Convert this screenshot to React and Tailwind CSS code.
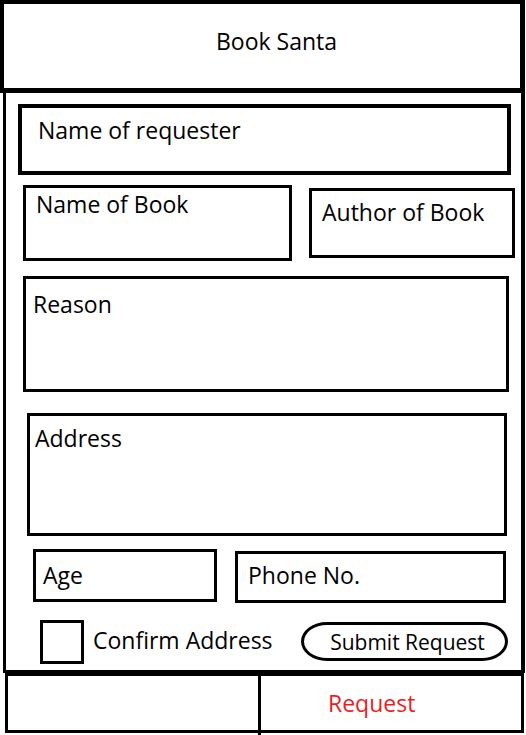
import React from "react";

function Field({ label, className, textClass }) {
  return (
    <div className={`border-black ${className}`}>
      <div className={`leading-none ${textClass}`}>{label}</div>
    </div>
  );
}

export default function App() {
  return (
    <div
      className="w-[526px] h-[735px] bg-white text-black overflow-hidden"
      style={{ fontFamily: '"Open Sans", "Noto Sans", sans-serif' }}
    >
      {/* header */}
      <div className="w-[525px] h-[93px] border-t-4 border-l-4 border-r-[5px] border-b-[5px] border-black pt-[26px] pl-[212px]">
        <div className="text-[23px] leading-none">Book Santa</div>
      </div>

      {/* form area */}
      <div className="ml-[3px] w-[522px] h-[580px] border-l-[3px] border-r-4 border-b-[3px] border-black flex flex-col text-[23px]">
        <Field
          label="Name of requester"
          className="mt-[11px] ml-[12px] w-[493px] h-[71px] border-4"
          textClass="pt-[11px] pl-[16px]"
        />

        <div className="flex items-start mt-[10px]">
          <Field
            label="Name of Book"
            className="ml-[17px] w-[269px] h-[76px] border-[3px]"
            textClass="pt-[5px] pl-[10px]"
          />
          <Field
            label="Author of Book"
            className="ml-[17px] mt-[3px] w-[206px] h-[70px] border-[3px]"
            textClass="pt-[10px] pl-[10px]"
          />
        </div>

        <Field
          label="Reason"
          className="mt-[15px] ml-[17px] w-[486px] h-[116px] border-[3px]"
          textClass="pt-[14px] pl-[7px]"
        />

        <Field
          label="Address"
          className="mt-[21px] ml-[21px] w-[480px] h-[123px] border-[3px]"
          textClass="pt-[11px] pl-[5px]"
        />

        <div className="flex items-start mt-[13px]">
          <Field
            label="Age"
            className="ml-[27px] w-[184px] h-[53px] border-[3px]"
            textClass="pt-[12px] pl-[7px]"
          />
          <Field
            label="Phone No."
            className="ml-[18px] mt-[2px] w-[271px] h-[52px] border-[3px]"
            textClass="pt-[10px] pl-[10px]"
          />
        </div>

        <div className="flex items-start mt-[17px]">
          <div className="ml-[34px] w-[44px] h-[44px] border-[3px] border-black" />
          <div className="ml-[9px] mt-[9px] leading-none">Confirm Address</div>
          <button className="ml-auto mr-[13px] mt-[2px] w-[207px] h-[39px] border-[3px] border-black rounded-[26px/50%] flex items-center justify-center pl-[6px] pt-[2px] text-[21px] leading-none bg-white">
            Submit Request
          </button>
        </div>
      </div>

      {/* bottom tabs */}
      <div className="ml-[5px] w-[519px] h-[60px] border-[3px] border-black flex text-[23px]">
        <div className="w-[253px] h-[59px] border-r-[3px] border-black" />
        <div className="flex-1 pt-[16px] pl-[67px] leading-none text-[#ed1c24]">Request</div>
      </div>
    </div>
  );
}
